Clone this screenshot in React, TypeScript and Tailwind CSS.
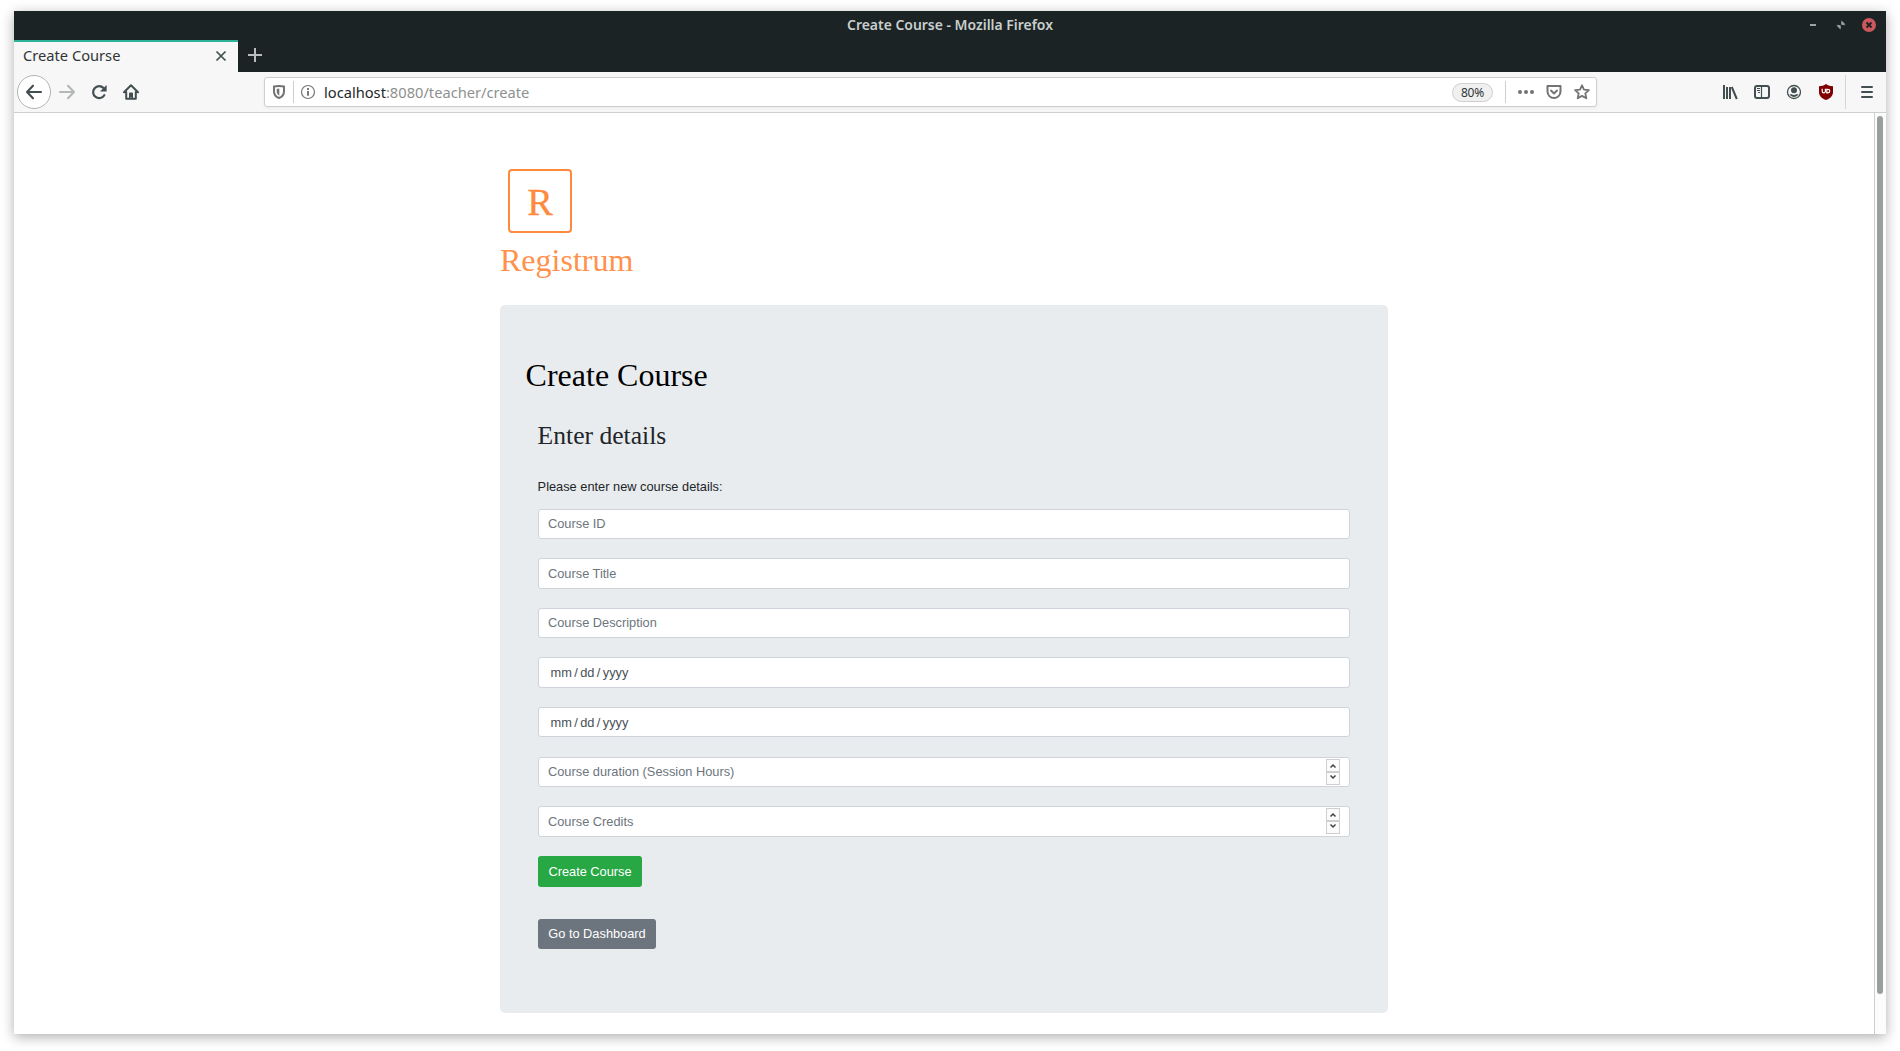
import React from 'react';

const ink = '#424e50';

function TitleBar() {
  return (
    <div className="relative flex h-7 shrink-0 items-center justify-center bg-[#1c2325]">
      <span className="pb-px font-['Noto_Sans',sans-serif] text-[13.95px] leading-[27px] font-semibold text-[#c8cfce]">
        Create Course - Mozilla Firefox
      </span>
      <div className="absolute top-0 right-[10px] flex h-7 items-center gap-[14px]">
        <svg width="14" height="14" viewBox="0 0 14 14"><rect x="4" y="6" width="6" height="2" fill="#9ba3a3" /></svg>
        <svg width="14" height="14" viewBox="0 0 14 14" fill="#9ba3a3"><path d="M7.500 2.500v4h4zM6.500 11.500v-4h-4z" /><path d="M7.500 6.500 11 7.500 7.500 3zM6.500 7.500 3 6.800 6.500 11z" /></svg>
        <svg width="14" height="14" viewBox="0 0 14 14"><circle cx="7" cy="7" r="7" fill="#cc575d" /><path d="m4.500 4.500 5 5m0-5-5 5" stroke="#1c2325" strokeWidth="1.900" /></svg>
      </div>
    </div>
  );
}

function TabStrip() {
  return (
    <div className="flex h-[33px] shrink-0 bg-[#1c2325]">
      <div className="mt-px flex w-56 items-start justify-between border-t-2 border-[#2eb398] bg-[#f7f7f7] pr-[10px] pl-[9px]">
        <span className="font-['Noto_Sans',sans-serif] text-[14.67px] leading-[26px] text-[#2f3536]">Create Course</span>
        <svg className="mt-[7px]" width="14" height="14" viewBox="0 0 14 14" stroke={ink} strokeWidth="1.700"><path d="m2.500 2.500 9 9m0-9-9 9" /></svg>
      </div>
      <svg className="mt-2 ml-[9px]" width="16" height="16" viewBox="0 0 16 16" stroke="#b9bebe" strokeWidth="2"><path d="M8 1v14M1 8h14" /></svg>
    </div>
  );
}

function Toolbar() {
  return (
    <div className="flex h-[41px] shrink-0 items-center border-b border-[#cfcfcf] bg-[#f7f7f7]">
      <div className="ml-[3px] grid size-[34px] shrink-0 place-items-center rounded-full border border-[#b2b4b4] bg-white">
        <svg width="18" height="18" viewBox="0 0 18 18" fill="none" stroke={ink} strokeWidth="2.100" strokeLinecap="round" strokeLinejoin="round"><path d="M2 9h14M8 2.700 2 9l6 6.300" /></svg>
      </div>
      <svg className="ml-[7px]" width="18" height="18" viewBox="0 0 18 18" fill="none" stroke="#b5b8b8" strokeWidth="2.100" strokeLinecap="round" strokeLinejoin="round"><path d="M2 9h14m-6-6.300L16 9l-6 6.300" /></svg>
      <svg className="ml-[14px]" width="18" height="18" viewBox="0 0 18 18" fill="none"><path d="M14.300 12.200A6 6 0 1 1 13.500 5" stroke={ink} strokeWidth="2.200" strokeLinecap="round" /><path d="M16.600 2v6.600H10z" fill={ink} /></svg>
      <svg className="ml-[14px]" width="18" height="18" viewBox="0 0 18 18"><path d="M2 9.200 9 2.300l7 6.900M4.200 9v6.800h9.600V9" fill="none" stroke={ink} strokeWidth="2" strokeLinecap="round" strokeLinejoin="round" /><path d="M7 10.500q0-1 1-1h2q1 0 1 1V16H9.700v-1.500H8.300V16H7z" fill={ink} /></svg>

      <div className="ml-[124px] flex h-[30px] w-[1333px] items-center rounded-[3px] border border-[#cfcfcf] bg-white shadow-[0_1px_3px_rgba(0,0,0,0.06)]">
        <svg className="ml-[6px]" width="16" height="16" viewBox="0 0 16 16"><path d="M8 1.900c2 0 3.700.2 5 .6v4.700c0 3.500-1.900 5.700-5 6.800-3.100-1.100-5-3.300-5-6.800V2.500c1.300-.4 3-.6 5-.6z" fill="none" stroke="#737373" strokeWidth="2" strokeLinejoin="round" /><path d="M8.300 4.500v7.200C6.500 10.700 5.700 9.200 5.700 7V4.900z" fill="#737373" /></svg>
        <div className="ml-[6px] h-[22px] w-px bg-[#cfcfcf]" />
        <svg className="ml-[6px]" width="16" height="16" viewBox="0 0 16 16"><circle cx="8" cy="8" r="6.500" fill="none" stroke="#777" strokeWidth="1.200" /><path d="M8 7v4.700M8 4v2" stroke="#737373" strokeWidth="1.900" /></svg>
        <span className="ml-2 font-['Noto_Sans',sans-serif] text-[14.67px] leading-7 text-[#8e9090]"><span className="text-[#232729]">localhost</span>:8080/teacher/create</span>
        <div className="ml-auto grid h-[19px] w-[41px] place-items-center rounded-full border border-[#cfcfcf] bg-[#f0f0f0] font-['Noto_Sans',sans-serif] text-[12px] leading-[17px] tracking-[-0.2px] text-[#2f3536]">80%</div>
        <div className="ml-3 h-[22px] w-px bg-[#cfcfcf]" />
        <svg className="ml-3" width="16" height="16" viewBox="0 0 16 16" fill="#737373"><circle cx="2" cy="8" r="2" /><circle cx="8" cy="8" r="2" /><circle cx="14" cy="8" r="2" /></svg>
        <svg className="ml-3" width="16" height="16" viewBox="0 0 16 16" fill="none" stroke="#737373" strokeWidth="2" strokeLinecap="round" strokeLinejoin="round"><path d="M1.500 2h13v5.500a6.500 6.500 0 0 1-13 0z" /><path d="M5 6.600 8 9.400l3-2.800" /></svg>
        <svg className="mr-[6px] ml-3" width="16" height="16" viewBox="0 0 16 16" fill="none" stroke="#737373" strokeWidth="1.800" strokeLinejoin="round"><path d="m8 1.300 2 4.400 4.900.5-3.600 3.200 1 4.900L8 11.900l-4.300 2.400 1-4.900L1.100 6.200 6 5.700z" /></svg>
      </div>

      <div className="ml-auto flex items-center">
        <svg width="16" height="16" viewBox="0 0 16 16" stroke={ink} strokeWidth="2"><path d="M2 1v14M5 3v12M8 3v12M9.800 3l5 12" /></svg>
        <svg className="ml-4" width="16" height="16" viewBox="0 0 16 16" fill="none" stroke={ink}><rect x="1" y="2" width="14" height="12" rx="2" strokeWidth="2" /><path d="M7.500 2v12" strokeWidth="1.200" /><path d="M3 4.500h3M3 6.500h3M4 8.500h2" /></svg>
        <svg className="ml-4" width="16" height="16" viewBox="0 0 16 16"><circle cx="8" cy="8" r="6.500" fill="none" stroke={ink} strokeWidth="1.300" /><circle cx="8" cy="6.300" r="3" fill={ink} /><path d="M3.500 10.300h2.200q2.300 1.300 4.600 0h2.200C11.400 12 9.800 12.900 8 12.900s-3.400-.9-4.500-2.600z" fill={ink} /></svg>
        <svg className="ml-4" width="16" height="16" viewBox="0 0 16 16"><path d="M8 0c2 1.500 4.300 2.200 7 2.200v6C15 12 12 14.500 8 16c-4-1.500-7-4-7-7.800v-6C3.700 2.200 6 1.500 8 0z" fill="#800000" /><path d="M4.200 4.800v2.400a1.600 1.600 0 0 0 3.200 0V4.800M8.800 5.300v3.500h1.200a1.750 1.750 0 0 0 0-3.500z" fill="none" stroke="#fff" strokeWidth="1.200" /></svg>
        <div className="ml-[11px] h-[34px] w-px bg-[#d5d5d5]" />
        <svg className="mr-[13px] ml-[15px]" width="12" height="16" viewBox="0 0 12 16" stroke={ink} strokeWidth="2" strokeLinecap="round"><path d="M1 3h10M1 8h10M1 13h10" /></svg>
      </div>
    </div>
  );
}

function Spinner() {
  return (
    <div className="mr-[9px] flex w-[14px] flex-col self-start pt-px">
      <div className="grid h-[13px] place-items-center border border-[#cfcfcf] bg-[#fbfbfb]">
        <svg width="8" height="6" viewBox="0 0 8 6" fill="none" stroke="#3b4446" strokeWidth="1.500"><path d="M1.500 4.500 4 2l2.500 2.500" /></svg>
      </div>
      <div className="flex h-[13px] justify-center border border-[#cfcfcf] bg-[#fbfbfb] pt-px">
        <svg width="8" height="6" viewBox="0 0 8 6" fill="none" stroke="#3b4446" strokeWidth="1.500"><path d="M1.500 1.500 4 4l2.500-2.500" /></svg>
      </div>
    </div>
  );
}

function DateHint() {
  return (
    <span className="flex pl-[2.5px] text-[#495057]">
      <span>mm</span><span className="px-[2.4px]">/</span><span>dd</span><span className="px-[2.4px]">/</span><span>yyyy</span>
    </span>
  );
}

const fields = [
  { label: 'Course ID', size: 'mt-0 h-[30px] pb-[2px]', kind: 'text' },
  { label: 'Course Title', size: 'mt-[19px] h-[31px]', kind: 'text' },
  { label: 'Course Description', size: 'mt-[19px] h-[30px] pb-[2px]', kind: 'text' },
  { label: 'Start date', size: 'mt-[19px] h-[31px]', kind: 'date' },
  { label: 'End date', size: 'mt-[19px] h-[30px]', kind: 'date' },
  { label: 'Course duration (Session Hours)', size: 'mt-5 h-[30px] pb-[2px]', kind: 'number' },
  { label: 'Course Credits', size: 'mt-[19px] h-[31px]', kind: 'number' },
];

function Page() {
  return (
    <div className="flex min-h-0 flex-1 bg-white">
      <main className="flex-1 overflow-hidden pt-14 pl-[486px]">
        <div className="ml-2 grid size-16 place-items-center rounded-[4px] border-2 border-[#ff8a3d] font-['Liberation_Serif',serif] text-[38.4px] leading-[60px] text-[#ff8a3d] [-webkit-text-stroke:0.3px_#ff8a3d]">
          <span className="relative top-px">R</span>
        </div>
        <h1 className="mt-2 h-16 font-['Liberation_Serif',serif] text-[32px] leading-[38px] text-[#ff914d]">Registrum</h1>
        <section className="h-[708px] w-[888px] rounded-[5px] bg-[#e9ecef] px-[38px] pt-[51px] font-['Liberation_Sans',sans-serif] text-[12.8px]">
          <h2 className="-ml-[12.4px] font-['Liberation_Serif',serif] text-[32px] leading-[38px] text-black">Create Course</h2>
          <h3 className="mt-[26px] -ml-[0.4px] font-['Liberation_Serif',serif] text-[25.6px] leading-[31px] text-[#212529]">Enter details</h3>
          <p className="mt-[26px] mb-[13px] -ml-[0.4px] leading-[19px] text-[#212529]">Please enter new course details:</p>
          {fields.map((f) => (
            <div key={f.label} className={`flex w-[812px] items-center rounded-[3px] border border-[#ced4da] bg-white pl-[9px] text-[#6c757d] ${f.size}`}>
              <span className="flex-1 leading-[19px]">{f.kind === 'date' ? <DateHint /> : f.label}</span>
              {f.kind === 'number' && <Spinner />}
            </div>
          ))}
          <button className="mt-[19px] block h-[31px] w-[104px] rounded-[3px] bg-[#28a745] text-white">Create Course</button>
          <button className="mt-8 block h-[30px] w-[118px] rounded-[3px] bg-[#6c757d] text-white">Go to Dashboard</button>
        </section>
      </main>
      <div className="w-3 border-l border-[#cfcfcf] bg-[#fcfcfc] pt-[3px] pl-[2px]">
        <div className="h-[878px] w-[6px] rounded-full bg-[#999f9e]" />
      </div>
    </div>
  );
}

export default function App() {
  return (
    <div className="h-[1051px] w-[1900px] overflow-hidden bg-white px-[14px] pt-[11px] pb-[17px]">
      <div className="flex h-[1023px] w-[1872px] flex-col shadow-[0_3px_12px_rgba(0,0,0,0.32)]">
        <TitleBar />
        <TabStrip />
        <Toolbar />
        <Page />
      </div>
    </div>
  );
}
